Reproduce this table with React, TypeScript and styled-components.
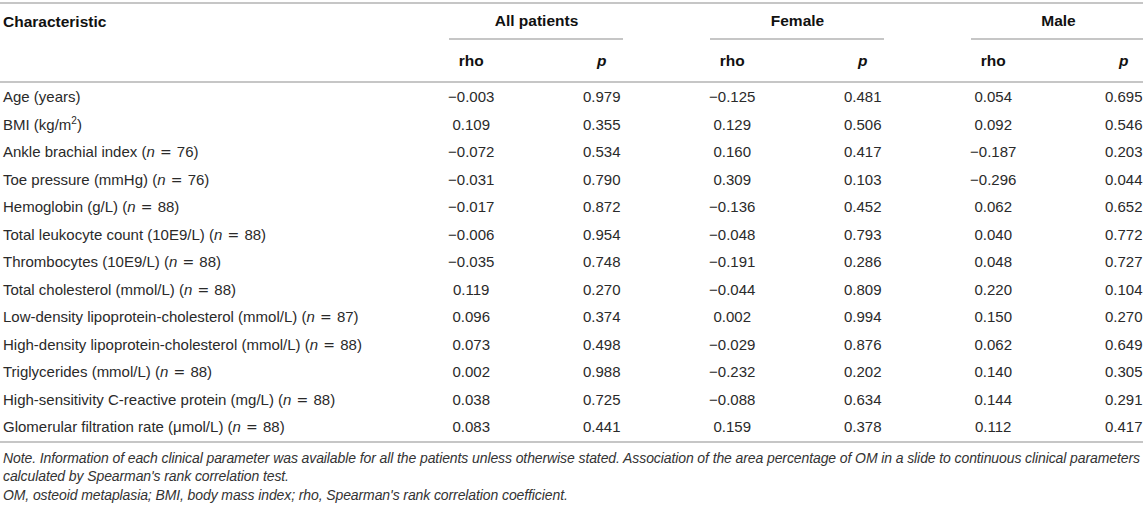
import React from "react";
import styled, { createGlobalStyle } from "styled-components";

const GlobalStyle = createGlobalStyle`
  html, body {
    margin: 0;
    padding: 0;
    background: #ffffff;
  }
  body {
    font-family: "Liberation Sans", Arial, Helvetica, sans-serif;
    color: #222222;
  }
`;

type DataRow = {
  label: React.ReactNode;
  values: string[];
};

const N = ({ v }: { v: string }) => (
  <>
    (<I>n</I> <Eq>=</Eq> {v})
  </>
);

const rows: DataRow[] = [
  { label: "Age (years)", values: ["−0.003", "0.979", "−0.125", "0.481", "0.054", "0.695"] },
  {
    label: (
      <>
        BMI (kg/m<sup>2</sup>)
      </>
    ),
    values: ["0.109", "0.355", "0.129", "0.506", "0.092", "0.546"],
  },
  {
    label: (
      <>
        Ankle brachial index <N v="76" />
      </>
    ),
    values: ["−0.072", "0.534", "0.160", "0.417", "−0.187", "0.203"],
  },
  {
    label: (
      <>
        Toe pressure (mmHg) <N v="76" />
      </>
    ),
    values: ["−0.031", "0.790", "0.309", "0.103", "−0.296", "0.044"],
  },
  {
    label: (
      <>
        Hemoglobin (g/L) <N v="88" />
      </>
    ),
    values: ["−0.017", "0.872", "−0.136", "0.452", "0.062", "0.652"],
  },
  {
    label: (
      <>
        Total leukocyte count (10E9/L) <N v="88" />
      </>
    ),
    values: ["−0.006", "0.954", "−0.048", "0.793", "0.040", "0.772"],
  },
  {
    label: (
      <>
        Thrombocytes (10E9/L) <N v="88" />
      </>
    ),
    values: ["−0.035", "0.748", "−0.191", "0.286", "0.048", "0.727"],
  },
  {
    label: (
      <>
        Total cholesterol (mmol/L) <N v="88" />
      </>
    ),
    values: ["0.119", "0.270", "−0.044", "0.809", "0.220", "0.104"],
  },
  {
    label: (
      <>
        Low-density lipoprotein-cholesterol (mmol/L) <N v="87" />
      </>
    ),
    values: ["0.096", "0.374", "0.002", "0.994", "0.150", "0.270"],
  },
  {
    label: (
      <>
        High-density lipoprotein-cholesterol (mmol/L) <N v="88" />
      </>
    ),
    values: ["0.073", "0.498", "−0.029", "0.876", "0.062", "0.649"],
  },
  {
    label: (
      <>
        Triglycerides (mmol/L) <N v="88" />
      </>
    ),
    values: ["0.002", "0.988", "−0.232", "0.202", "0.140", "0.305"],
  },
  {
    label: (
      <>
        High-sensitivity C-reactive protein (mg/L) <N v="88" />
      </>
    ),
    values: ["0.038", "0.725", "−0.088", "0.634", "0.144", "0.291"],
  },
  {
    label: (
      <>
        Glomerular filtration rate (μmol/L) <N v="88" />
      </>
    ),
    values: ["0.083", "0.441", "0.159", "0.378", "0.112", "0.417"],
  },
];

const groups = ["All patients", "Female", "Male"];

const App = () => {
  return (
    <>
      <GlobalStyle />
      <Page>
        <Table>
          <HeadRow $h={36}>
            <HeadCell>Characteristic</HeadCell>
            {groups.map((g) => (
              <GroupCell key={g}>
                <GroupTitle>{g}</GroupTitle>
                <SubRule />
              </GroupCell>
            ))}
          </HeadRow>
          <HeadRow $h={41} $rule>
            <HeadCell />
            {groups.map((g) => (
              <React.Fragment key={g}>
                <ColHead>rho</ColHead>
                <ColHead $italic>p</ColHead>
              </React.Fragment>
            ))}
          </HeadRow>
          <div>
            {rows.map((r, i) => (
              <BodyRow key={i}>
                <Label>{r.label}</Label>
                {r.values.map((v, j) => (
                  <Value key={j}>{v}</Value>
                ))}
              </BodyRow>
            ))}
          </div>
        </Table>
        <Notes>
          <NoteLine>
            Note. Information of each clinical parameter was available for all the patients unless otherwise stated.
            Association of the area percentage of OM in a slide to continuous clinical parameters
          </NoteLine>
          <NoteLine>calculated by Spearman's rank correlation test.</NoteLine>
          <NoteLine>OM, osteoid metaplasia; BMI, body mass index; rho, Spearman's rank correlation coefficient.</NoteLine>
        </Notes>
      </Page>
    </>
  );
};

// the table runs a little past the right edge, as in the cropped original
const COLS = "406px repeat(6, 130.5px)";
const RULE = "2px solid #c6c6c6";

const Page = styled.div`
  width: 1143px;
  height: 509px;
  overflow: hidden;
`;

const Table = styled.div`
  width: 1189px;
  margin-top: 2px;
  border-top: ${RULE};
  border-bottom: ${RULE};
`;

const HeadRow = styled.div<{ $h: number; $rule?: boolean }>`
  display: grid;
  grid-template-columns: ${COLS};
  height: ${(p) => p.$h}px;
  border-bottom: ${(p) => (p.$rule ? RULE : "none")};
  font-weight: bold;
  font-size: 15.5px;
  color: #111111;
`;

const HeadCell = styled.div`
  display: flex;
  align-items: center;
  padding-left: 3px;
`;

const GroupCell = styled.div`
  grid-column: span 2;
  display: flex;
  flex-direction: column;
`;

const GroupTitle = styled.div`
  flex: 1;
  display: flex;
  align-items: center;
  justify-content: center;
`;

const SubRule = styled.div`
  height: 2px;
  margin: 0 44px 0 43px;
  background: #c6c6c6;
`;

const ColHead = styled.div<{ $italic?: boolean }>`
  display: flex;
  align-items: center;
  justify-content: center;
  font-style: ${(p) => (p.$italic ? "italic" : "normal")};
`;

const BodyRow = styled.div`
  display: grid;
  grid-template-columns: ${COLS};
  height: 27.5px;
  align-items: center;
  font-size: 15px;
  color: #2a2a2a;
`;

const Label = styled.div`
  padding-left: 3px;
  white-space: nowrap;

  sup {
    font-size: 10px;
    line-height: 0;
  }
`;

const Value = styled.div`
  text-align: center;
`;

const I = styled.i`
  font-style: italic;
`;

const Eq = styled.span`
  font-family: "DejaVu Sans", sans-serif;
  font-size: 14px;
  margin: 0 1px;
`;

const Notes = styled.div`
  padding: 6px 3px 0;
  font-size: 14px;
  font-style: italic;
  color: #333333;
  line-height: 18.5px;
  letter-spacing: -0.1px;
`;

const NoteLine = styled.div`
  white-space: nowrap;
`;

export default App;
